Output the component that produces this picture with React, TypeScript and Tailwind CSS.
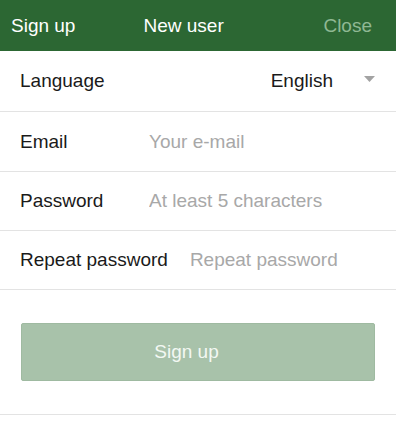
import React from "react";

const rows = [
  { label: "Email", placeholder: "Your e-mail", type: "email", h: "h-[60px]" },
  { label: "Password", placeholder: "At least 5 characters", type: "password", h: "h-[59px]" },
  { label: "Repeat password", placeholder: "Repeat password", type: "password", h: "h-[59px]" },
];

export default function App() {
  return (
    <div className="w-[396px] h-[436px] bg-white text-[19px] text-[#1a1a1a] font-['Liberation_Sans',Arial,sans-serif]">
      <header className="flex items-center h-[51px] pt-[1px] bg-[#2c6733] text-white">
        <span className="pl-[11px]">Sign up</span>
        <span className="ml-[68px]">New user</span>
        <span className="ml-auto mr-[24px] text-[#8fb893]">Close</span>
      </header>

      <div className="flex items-center h-[61px] px-5 pt-[1px] border-b border-[#e3e3e3]">
        <span className="flex-1">Language</span>
        <span className="mr-[31px]">English</span>
        <svg width="11" height="6" viewBox="0 0 11 6" className="mr-[1px] mt-[-6px]">
          <path d="M0 0h11L5.5 6z" fill="#a3a3a3" />
        </svg>
      </div>

      {rows.map((r) => (
        <div key={r.label} className={`flex items-center ${r.h} px-5 pt-[1px] border-b border-[#e3e3e3]`}>
          <span className="min-w-[107px] mr-[22px] whitespace-nowrap">{r.label}</span>
          <input
            type={r.type}
            placeholder={r.placeholder}
            className="flex-1 min-w-0 bg-transparent outline-none placeholder:text-[#a8a8a8]"
          />
        </div>
      ))}

      <div className="px-[21px] pt-[33px] pb-[33px] border-b border-[#e3e3e3]">
        <button className="flex w-full h-[58px] items-center justify-center pr-[23px] rounded-[2px] bg-[#a8c2aa] border border-[#9fbaa1] text-[#f3f8f3]">
          Sign up
        </button>
      </div>
    </div>
  );
}
